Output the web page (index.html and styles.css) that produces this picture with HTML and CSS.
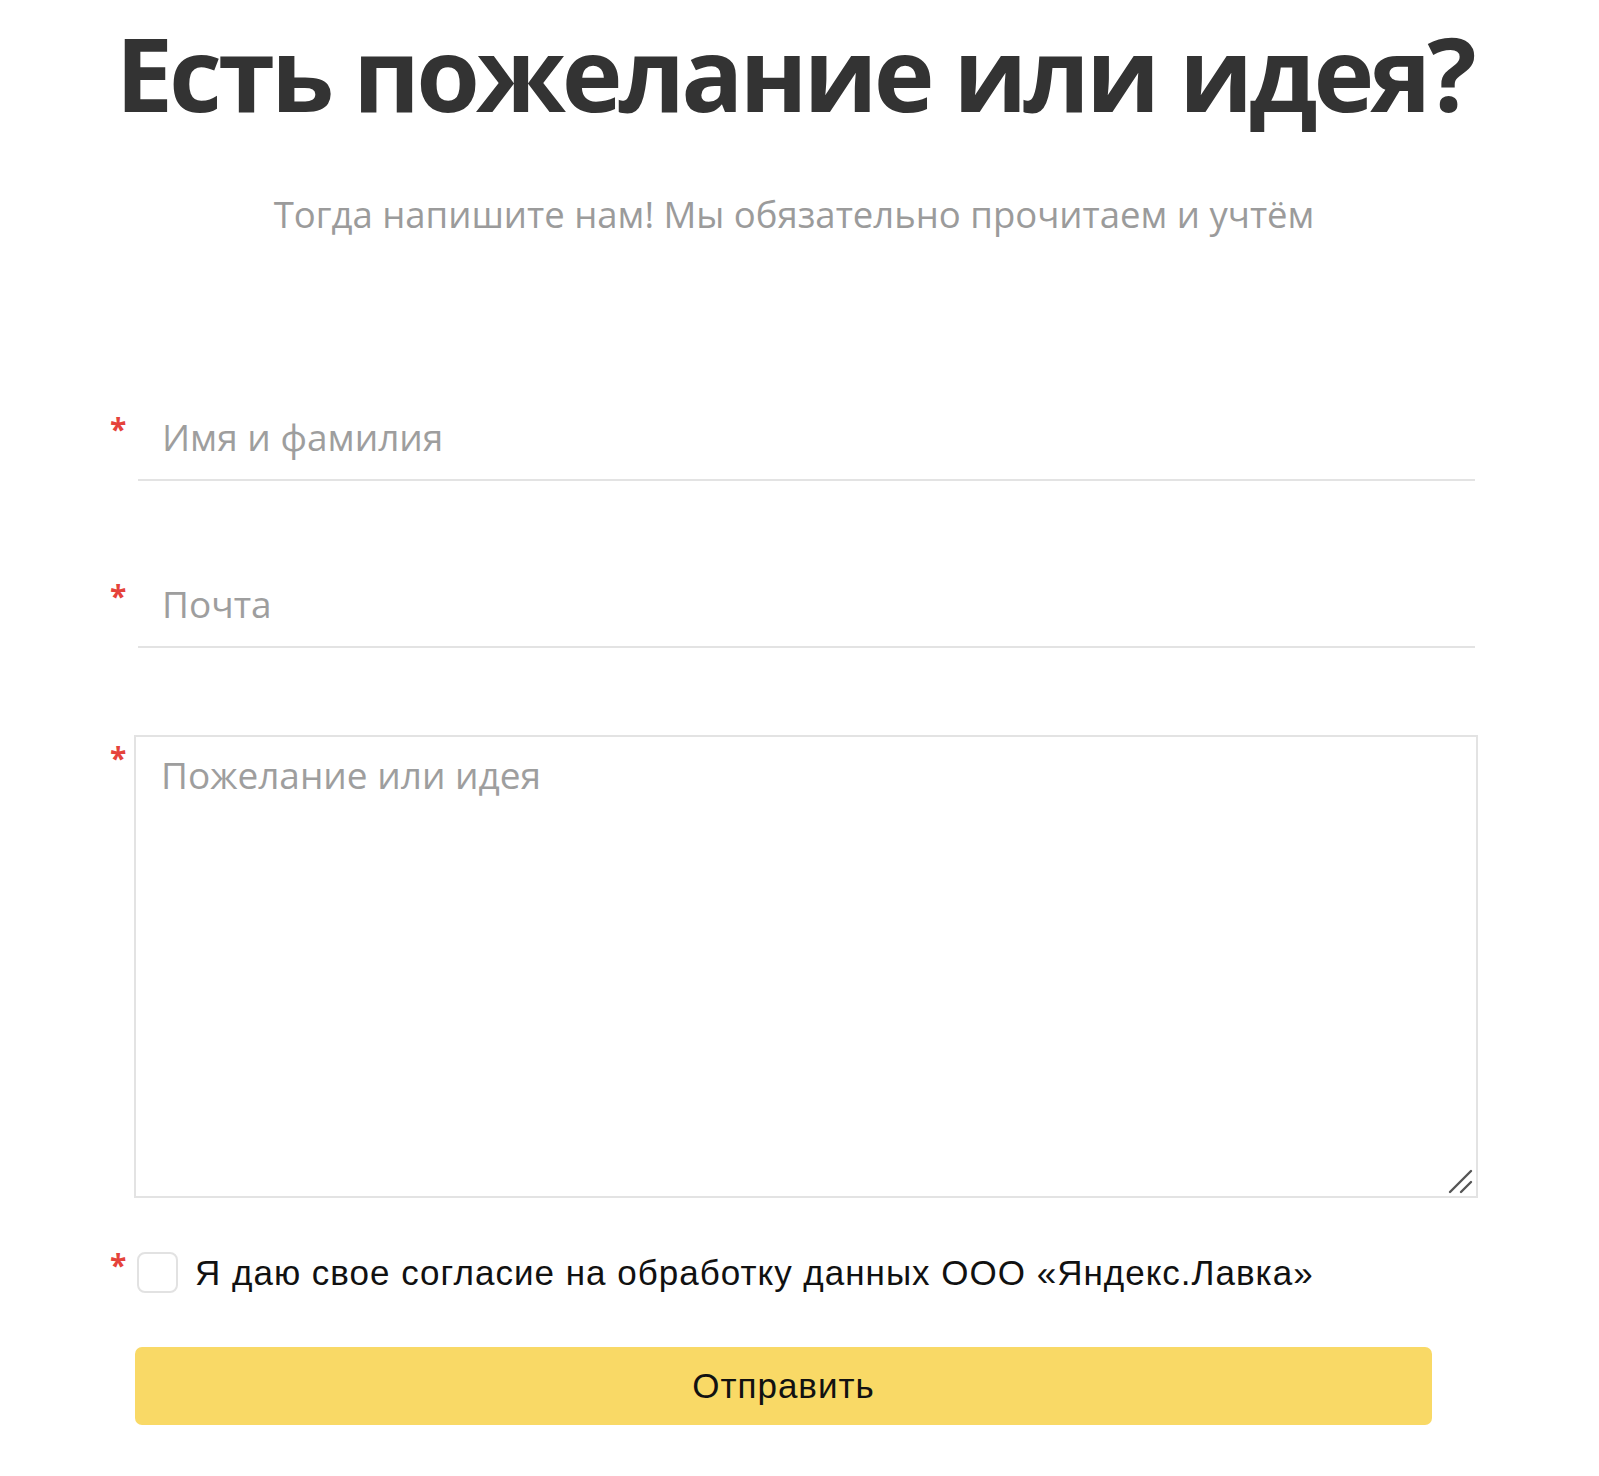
FILE: index.html
```html
<!DOCTYPE html>
<html lang="ru">
<head>
<meta charset="utf-8">
<title>Есть пожелание или идея?</title>
<link rel="stylesheet" href="styles.css">
</head>
<body>
<main class="page">
  <h1 class="title">Есть пожелание или идея?</h1>
  <p class="subtitle">Тогда напишите нам! Мы обязательно прочитаем и учтём</p>
  <form class="form">
    <div class="row row-input">
      <span class="req">*</span>
      <input class="line-input" type="text" placeholder="Имя и фамилия">
    </div>
    <div class="row row-input row-second">
      <span class="req">*</span>
      <input class="line-input" type="email" placeholder="Почта">
    </div>
    <div class="row row-area">
      <span class="req req-area">*</span>
      <div class="area-wrap">
        <textarea class="area" placeholder="Пожелание или идея"></textarea>
        <svg class="grip" width="26" height="26" viewBox="0 0 26 26"><path d="M3 24 L24 3 M14 24 L24 14" stroke="#555555" stroke-width="2.4" stroke-linecap="round" fill="none"/></svg>
      </div>
    </div>
    <div class="row row-check">
      <span class="req req-check">*</span>
      <label class="check">
        <input class="check-box" type="checkbox">
        <span class="check-text">Я даю свое согласие на обработку данных ООО «Яндекс.Лавка»</span>
      </label>
    </div>
    <button class="submit" type="button">Отправить</button>
  </form>
</main>
</body>
</html>
```

FILE: styles.css
```css
html, body {
  margin: 0;
  padding: 0;
  background: #ffffff;
}

body {
  font-family: "Open Sans", "Noto Sans", sans-serif;
  color: #333333;
}

.page {
  width: 1368px;
  margin-left: 110px;
  padding-top: 12px;
}

.title {
  margin: 0;
  text-align: center;
  font-size: 103px;
  font-weight: 700;
  line-height: 120px;
  color: #333333;
  letter-spacing: -4px;
  white-space: nowrap;
}

.subtitle {
  margin: 60px 0 0;
  text-align: center;
  font-size: 36.5px;
  line-height: 44px;
  color: #9b9b9b;
}

.form {
  margin-top: 157px;
}

.row {
  display: flex;
  align-items: flex-start;
}

.req {
  flex: 0 0 24px;
  width: 24px;
  font-size: 30px;
  font-weight: 700;
  line-height: 30px;
  color: #e5433b;
  padding-top: 21px;
}

.line-input {
  flex: 1;
  margin: 0 3px 0 4px;
  height: 88px;
  box-sizing: border-box;
  padding: 0 0 0 24px;
  border: none;
  border-bottom: 2px solid #e3e3e3;
  font-family: "Open Sans", "Noto Sans", sans-serif;
  font-size: 37px;
  color: #333333;
  background: transparent;
  outline: none;
}

.line-input::placeholder {
  color: #9e9e9e;
}

.row-second {
  margin-top: 79px;
}

.row-area {
  margin-top: 87px;
}

.req-area {
  padding-top: 8px;
}

.area-wrap {
  position: relative;
  flex: 1;
  height: 463px;
}

.area {
  display: block;
  width: 100%;
  height: 100%;
  box-sizing: border-box;
  border: 2px solid #e3e3e3;
  padding: 16px 25px;
  font-family: "Open Sans", "Noto Sans", sans-serif;
  font-size: 37px;
  line-height: 44px;
  color: #333333;
  resize: none;
  outline: none;
}

.area::placeholder {
  color: #9e9e9e;
}

.grip {
  position: absolute;
  right: 5px;
  bottom: 4px;
}

.row-check {
  margin-top: 54px;
  align-items: center;
}

.req-check {
  align-self: flex-start;
  padding-top: 0;
  margin-top: -2px;
}

.check {
  display: flex;
  align-items: center;
  gap: 17px;
  margin-left: 3px;
}

.check-box {
  appearance: none;
  -webkit-appearance: none;
  margin: 0;
  width: 41px;
  height: 41px;
  box-sizing: border-box;
  border: 2px solid #e2e2e2;
  border-radius: 8px;
  background: #ffffff;
}

.check-text {
  font-family: "Liberation Sans", Arial, sans-serif;
  font-size: 35px;
  letter-spacing: 1px;
  color: #111111;
}

.submit {
  display: block;
  margin: 54px 0 0 25px;
  width: 1297px;
  height: 78px;
  padding: 0;
  border: none;
  border-radius: 7px;
  background: #f9d966;
  font-family: "Liberation Sans", Arial, sans-serif;
  font-size: 35px;
  letter-spacing: 1px;
  color: #111111;
}
```
